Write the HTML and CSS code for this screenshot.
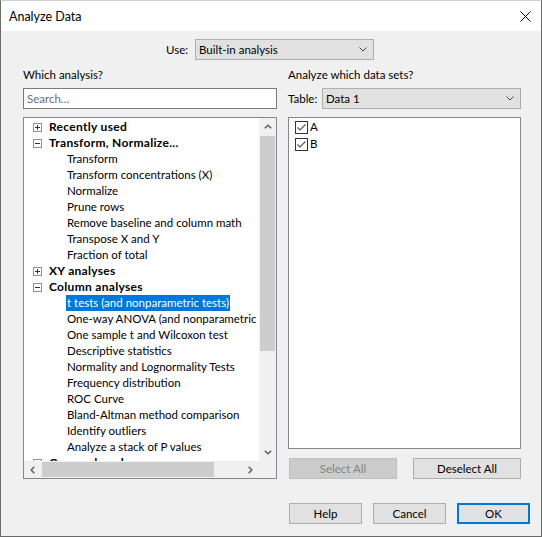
FILE: index.html
```html
<!DOCTYPE html>
<html>
<head>
<meta charset="utf-8">
<link rel="stylesheet" href="styles.css">
</head>
<body>
<div class="window">
  <div class="titlebar">
    <span class="title">Analyze Data</span>
    <svg class="close" width="11" height="11" viewBox="0 0 11 11"><path d="M0.5 0.5L10.5 10.5M10.5 0.5L0.5 10.5" stroke="#000" stroke-width="1"/></svg>
  </div>
  <div class="body">
    <div class="use-row">
      <span class="use-label">Use:</span>
      <div class="combo use-combo"><span>Built-in analysis</span><svg width="8" height="5" viewBox="0 0 8 5"><path d="M0.5 0.5L4 4L7.5 0.5" fill="none" stroke="#444"/></svg></div>
    </div>
    <div class="columns">
      <div class="col">
        <div class="heading">Which analysis?</div>
        <div class="search">Search…</div>
        <div class="tree">
          <div class="tree-list">
            <div class="row group"><svg class="exp" width="9" height="9" viewBox="0 0 9 9"><rect x="0.5" y="0.5" width="8" height="8" fill="#fff" stroke="#919191"/><path d="M2 4.5H7M4.5 2V7" stroke="#333"/></svg><b>Recently used</b></div>
            <div class="row group"><svg class="exp" width="9" height="9" viewBox="0 0 9 9"><rect x="0.5" y="0.5" width="8" height="8" fill="#fff" stroke="#919191"/><path d="M2 4.5H7" stroke="#333"/></svg><b>Transform, Normalize...</b></div>
            <div class="row item"><span>Transform</span></div>
            <div class="row item"><span>Transform concentrations (X)</span></div>
            <div class="row item"><span>Normalize</span></div>
            <div class="row item"><span>Prune rows</span></div>
            <div class="row item"><span>Remove baseline and column math</span></div>
            <div class="row item"><span>Transpose X and Y</span></div>
            <div class="row item"><span>Fraction of total</span></div>
            <div class="row group"><svg class="exp" width="9" height="9" viewBox="0 0 9 9"><rect x="0.5" y="0.5" width="8" height="8" fill="#fff" stroke="#919191"/><path d="M2 4.5H7M4.5 2V7" stroke="#333"/></svg><b>XY analyses</b></div>
            <div class="row group"><svg class="exp" width="9" height="9" viewBox="0 0 9 9"><rect x="0.5" y="0.5" width="8" height="8" fill="#fff" stroke="#919191"/><path d="M2 4.5H7" stroke="#333"/></svg><b>Column analyses</b></div>
            <div class="row item selected"><span>t tests (and nonparametric tests)</span></div>
            <div class="row item"><span>One-way ANOVA (and nonparametric or mixed)</span></div>
            <div class="row item"><span>One sample t and Wilcoxon test</span></div>
            <div class="row item"><span>Descriptive statistics</span></div>
            <div class="row item"><span>Normality and Lognormality Tests</span></div>
            <div class="row item"><span>Frequency distribution</span></div>
            <div class="row item"><span>ROC Curve</span></div>
            <div class="row item"><span>Bland-Altman method comparison</span></div>
            <div class="row item"><span>Identify outliers</span></div>
            <div class="row item"><span>Analyze a stack of P values</span></div>
            <div class="row group"><svg class="exp" width="9" height="9" viewBox="0 0 9 9"><rect x="0.5" y="0.5" width="8" height="8" fill="#fff" stroke="#919191"/><path d="M2 4.5H7M4.5 2V7" stroke="#333"/></svg><b>Grouped analyses</b></div>
          </div>
          <div class="vscroll">
            <div class="arrow"><svg width="8" height="5" viewBox="0 0 8 5"><path d="M0.8 4.3L4 1.2L7.2 4.3" fill="none" stroke="#606060" stroke-width="1.5"/></svg></div>
            <div class="vtrack"><div class="vthumb"></div></div>
            <div class="arrow"><svg width="8" height="5" viewBox="0 0 8 5"><path d="M0.8 0.7L4 3.8L7.2 0.7" fill="none" stroke="#606060" stroke-width="1.5"/></svg></div>
          </div>
          <div class="hscroll">
            <div class="arrow"><svg width="5" height="8" viewBox="0 0 5 8"><path d="M4.3 0.8L1.2 4L4.3 7.2" fill="none" stroke="#606060" stroke-width="1.5"/></svg></div>
            <div class="htrack"><div class="hthumb"></div></div>
            <div class="arrow"><svg width="5" height="8" viewBox="0 0 5 8"><path d="M0.7 0.8L3.8 4L0.7 7.2" fill="none" stroke="#606060" stroke-width="1.5"/></svg></div>
          </div>
          <div class="corner"></div>
        </div>
      </div>
      <div class="col">
        <div class="heading">Analyze which data sets?</div>
        <div class="table-row">
          <span class="table-label">Table:</span>
          <div class="combo table-combo"><span>Data 1</span><svg width="8" height="5" viewBox="0 0 8 5"><path d="M0.5 0.5L4 4L7.5 0.5" fill="none" stroke="#444"/></svg></div>
        </div>
        <div class="datasets">
          <div class="check"><svg width="13" height="13" viewBox="0 0 13 13"><rect x="0.5" y="0.5" width="12" height="12" fill="#fff" stroke="#333"/><path d="M2.5 6.5L5 9L10.5 3.5" fill="none" stroke="#555" stroke-width="1.2"/></svg><span>A</span></div>
          <div class="check"><svg width="13" height="13" viewBox="0 0 13 13"><rect x="0.5" y="0.5" width="12" height="12" fill="#fff" stroke="#333"/><path d="M2.5 6.5L5 9L10.5 3.5" fill="none" stroke="#555" stroke-width="1.2"/></svg><span>B</span></div>
        </div>
        <div class="sel-buttons">
          <button class="btn wide" disabled>Select All</button>
          <button class="btn wide">Deselect All</button>
        </div>
      </div>
    </div>
    <div class="footer">
      <button class="btn">Help</button>
      <button class="btn">Cancel</button>
      <button class="btn default">OK</button>
    </div>
  </div>
</div>
</body>
</html>
```
FILE: styles.css
```css
* { box-sizing: border-box; }
body {
  margin: 0;
  font-family: Lato, "Liberation Sans", sans-serif;
  font-size: 11.5px;
  color: #000;
}
.window {
  width: 542px;
  height: 537px;
  border: 1px solid #6a6a6a;
  border-top-color: #cfcfcf;
  display: flex;
  flex-direction: column;
  background: #f0f0f0;
}
.titlebar {
  height: 30px;
  flex: none;
  background: #fff;
  display: flex;
  align-items: center;
  justify-content: space-between;
  padding: 0 10px 0 8px;
}
.title { font-size: 12.5px; }
.body {
  flex: 1;
  display: flex;
  flex-direction: column;
  padding: 8px 0 0 22px;
}
.use-row {
  display: flex;
  align-items: center;
  height: 21px;
  padding-left: 143px;
}
.use-label { width: 29px; }
.combo {
  height: 21px;
  background: #e1e1e1;
  border: 1px solid #adadad;
  display: flex;
  align-items: center;
  justify-content: space-between;
  padding: 0 6px 0 3px;
}
.use-combo { width: 179px; }
.columns {
  display: grid;
  grid-template-columns: 254px 233px;
  column-gap: 11px;
  margin-top: 7px;
}
.col { display: flex; flex-direction: column; }
.heading { height: 15px; line-height: 15px; }
.search {
  margin-top: 6px;
  height: 21px;
  background: #fff;
  border: 1px solid #7a7a7a;
  padding-left: 3px;
  line-height: 19px;
  color: #6d6d6d;
}
.tree {
  margin-top: 8px;
  height: 362px;
  border: 1px solid #828790;
  background: #fff;
  display: grid;
  grid-template-columns: 1fr 17px;
  grid-template-rows: 1fr 17px;
}
.tree-list {
  overflow: hidden;
  padding-top: 1px;
}
.row {
  height: 16px;
  line-height: 16px;
  white-space: nowrap;
  display: flex;
  align-items: center;
}
.group { padding-left: 9px; }
.exp { flex: none; margin-right: 7px; }
.group b { font-weight: bold; font-size: 12px; letter-spacing: 0.3px; }
.item { padding-left: 42px; }
.item span { padding: 0 1px; }
.selected span { background: #0078d7; color: #fff; }
.vscroll {
  background: #f0f0f0;
  display: flex;
  flex-direction: column;
}
.arrow {
  width: 17px;
  height: 17px;
  flex: none;
  display: flex;
  align-items: center;
  justify-content: center;
}
.vtrack { flex: 1; padding: 1px 1px 0 1px; }
.vthumb { height: 215px; background: #cdcdcd; }
.hscroll {
  background: #f0f0f0;
  display: flex;
}
.htrack { flex: 1; padding: 1px 0 1px 1px; }
.hthumb { width: 172px; height: 100%; background: #cdcdcd; }
.corner { background: #f0f0f0; }
.table-row {
  margin-top: 6px;
  display: flex;
  align-items: center;
  height: 21px;
}
.table-label { width: 34px; }
.table-combo { flex: 1; }
.datasets {
  margin-top: 8px;
  height: 332px;
  background: #fff;
  border: 1px solid #828790;
  padding: 3px 6px;
}
.check {
  height: 17px;
  display: flex;
  align-items: flex-start;
}
.check svg { flex: none; }
.check span { line-height: 12px; margin-left: 2px; }
.sel-buttons {
  margin-top: 9px;
  display: flex;
  justify-content: space-between;
  padding-left: 1px;
}
.btn {
  font: inherit;
  color: #000;
  width: 73px;
  height: 21px;
  background: #e1e1e1;
  border: 1px solid #adadad;
  padding: 0;
}
.btn.wide { width: 108px; }
.btn:disabled { background: #cccccc; border-color: #bfbfbf; color: #838383; }
.btn.default { border: 2px solid #0078d7; }
.footer {
  margin-top: 24px;
  display: flex;
  justify-content: flex-end;
  gap: 11px;
  padding-right: 11px;
}
```
